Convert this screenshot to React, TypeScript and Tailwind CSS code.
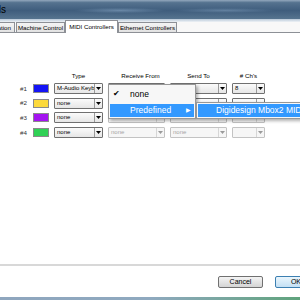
import React from "react";

const font = { fontFamily: '"Liberation Sans", Arial, sans-serif' };

const Arrow = ({ on }: { on: boolean }) => (
  <svg width="5" height="3" viewBox="0 0 5 3">
    <path d="M0 0h5L2.5 3z" fill={on ? "#000" : "#9a9a9a"} />
  </svg>
);

const Drop = ({ text, on, w }: { text: string; on: boolean; w: string }) => (
  <div
    className={`${w} h-[11px] flex border rounded-[1px] ${
      on
        ? "border-[#707070] bg-gradient-to-b from-[#fbfbfb] to-[#e6e6e6] text-black"
        : "border-[#c3c3c3] bg-[#f6f6f6] text-[#a5a5a5]"
    }`}
  >
    <div className="flex-1 overflow-hidden whitespace-nowrap pl-[2px] text-[6px] leading-[9px]">
      {text}
    </div>
    <div
      className={`w-[8px] flex items-center justify-center border-l ${
        on ? "border-[#9a9a9a]" : "border-[#d6d6d6]"
      }`}
    >
      <Arrow on={on} />
    </div>
  </div>
);

const rows = [
  { n: "#1", color: "bg-[#1414f5]", type: "M-Audio Keybd", rx: "", tx: "", ch: "8", on: true },
  { n: "#2", color: "bg-[#fcd93c]", type: "none", rx: "none", tx: "none", ch: "", on: true },
  { n: "#3", color: "bg-[#a414f0]", type: "none", rx: "none", tx: "none", ch: "", on: false },
  { n: "#4", color: "bg-[#30d155]", type: "none", rx: "none", tx: "none", ch: "", on: false },
];

const Tab = ({ label, active, w }: { label: string; active?: boolean; w?: string }) => (
  <div
    className={`${w ?? ""} flex items-center justify-center whitespace-nowrap border border-b-0 border-[#8d9096] text-[6.2px] ${
      active
        ? "h-[13px] bg-white px-[4px] -mb-[1px] relative"
        : "h-[10px] bg-gradient-to-b from-[#f4f4f4] to-[#e2e2e2] px-[3px]"
    }`}
  >
    {label}
  </div>
);

export default function App() {
  return (
    <div className="relative w-[300px] h-[300px] overflow-hidden bg-white flex flex-col" style={font}>
      {/* title bar */}
      <div className="h-[19px] shrink-0 flex items-center bg-[radial-gradient(ellipse_at_40%_55%,rgba(140,170,200,0.55),transparent_18%),radial-gradient(ellipse_at_75%_55%,rgba(140,170,200,0.45),transparent_16%),linear-gradient(to_bottom,#93a8bd_0%,#55728f_14%,#3f5d7d_55%,#56748f_100%)]">
        <div className="w-[6px] overflow-hidden flex justify-end">
          <span className="whitespace-nowrap text-[10px] text-black">Peripherals</span>
        </div>
      </div>
      <div className="h-[3px] shrink-0 bg-gradient-to-b from-[#b8c8d8] to-[#eef2f6]" />

      {/* tabs */}
      <div className="h-[11px] shrink-0 flex items-end bg-[#f8f8f8] border-b border-[#8d9096]">
        <div className="w-[15px] overflow-hidden flex justify-end">
          <Tab label="Synchronization" />
        </div>
        <div className="w-[1px]" />
        <Tab label="Machine Control" w="w-[49px]" />
        <Tab label="MIDI Controllers" active w="w-[53px]" />
        <Tab label="Ethernet Controllers" w="w-[59px]" />
      </div>

      {/* panel */}
      <div className="flex-1 bg-white border-b-2 border-[#d8d8d8] pt-[39px] text-[6.2px]">
        <div className="flex pl-[18px] h-[8px] items-center">
          <div className="w-[31px]" />
          <div className="ml-[5px] w-[49px] text-center">Type</div>
          <div className="ml-[5px] w-[57px] text-center pl-[8px]">Receive From</div>
          <div className="ml-[5px] w-[57px] text-center">Send To</div>
          <div className="ml-[5px] w-[33px] text-center">{"# Ch's"}</div>
        </div>
        <div className="mt-[3px] flex flex-col gap-[3.6px]">
          {rows.map((r) => (
            <div key={r.n} className="flex pl-[18px] h-[11px] items-center">
              <div className="w-[15px] pl-[2px] text-[#333]">{r.n}</div>
              <div className={`w-[16px] h-[9px] border border-[#8a8a8a] ${r.color}`} />
              <Drop text={r.type} on w="ml-[5px] w-[49px]" />
              <Drop text={r.rx} on={r.on} w="ml-[5px] w-[57px]" />
              <Drop text={r.tx} on={r.on} w="ml-[5px] w-[57px]" />
              <Drop text={r.ch} on={r.on} w="ml-[5px] w-[33px]" />
            </div>
          ))}
        </div>
      </div>

      {/* buttons */}
      <div className="h-[31px] shrink-0 flex items-center pl-[218px] gap-[12px] bg-white">
        <button className="w-[45px] h-[12px] shrink-0 rounded-[2px] border border-[#707070] bg-gradient-to-b from-[#f4f4f4] to-[#d4d4d4] text-[7px] leading-none">
          Cancel
        </button>
        <button className="w-[45px] h-[12px] shrink-0 rounded-[2px] border border-[#3c7fb1] bg-gradient-to-b from-[#eaf6fd] to-[#c4e0f4] text-[7px] leading-none pr-[18px] text-right">
          OK
        </button>
      </div>
      <div className="h-[3px] shrink-0 bg-gradient-to-r from-[#8fa6be] via-[#8fa9bf] to-[#5fa37c]" />

      {/* open dropdown menu */}
      <div className="absolute left-[108px] top-[84px] w-[88px] h-[35px] bg-[#f7f7f7] border border-[#979797] shadow-[2px_2px_3px_rgba(0,0,0,0.3)] p-[1px] text-[8.5px] flex flex-col">
        <div className="h-[16px] flex items-center">
          <span className="w-[20px] pl-[3px] text-[8px]">✔</span>
          <span>none</span>
        </div>
        <div className="h-[13px] mt-[2px] flex items-center bg-[#3399ff] text-white">
          <span className="w-[20px]" />
          <span className="flex-1">Predefined</span>
          <span className="pr-[3px] text-[6px]">▶</span>
        </div>
      </div>
      <div className="absolute left-[196px] top-[102px] w-[120px] h-[17px] bg-[#f7f7f7] border border-[#979797] shadow-[2px_2px_3px_rgba(0,0,0,0.3)] p-[1px] text-[8.5px]">
        <div className="h-[13px] flex items-center bg-[#3399ff] text-white pl-[18px] whitespace-nowrap">
          Digidesign Mbox2 MIDI
        </div>
      </div>
    </div>
  );
}
